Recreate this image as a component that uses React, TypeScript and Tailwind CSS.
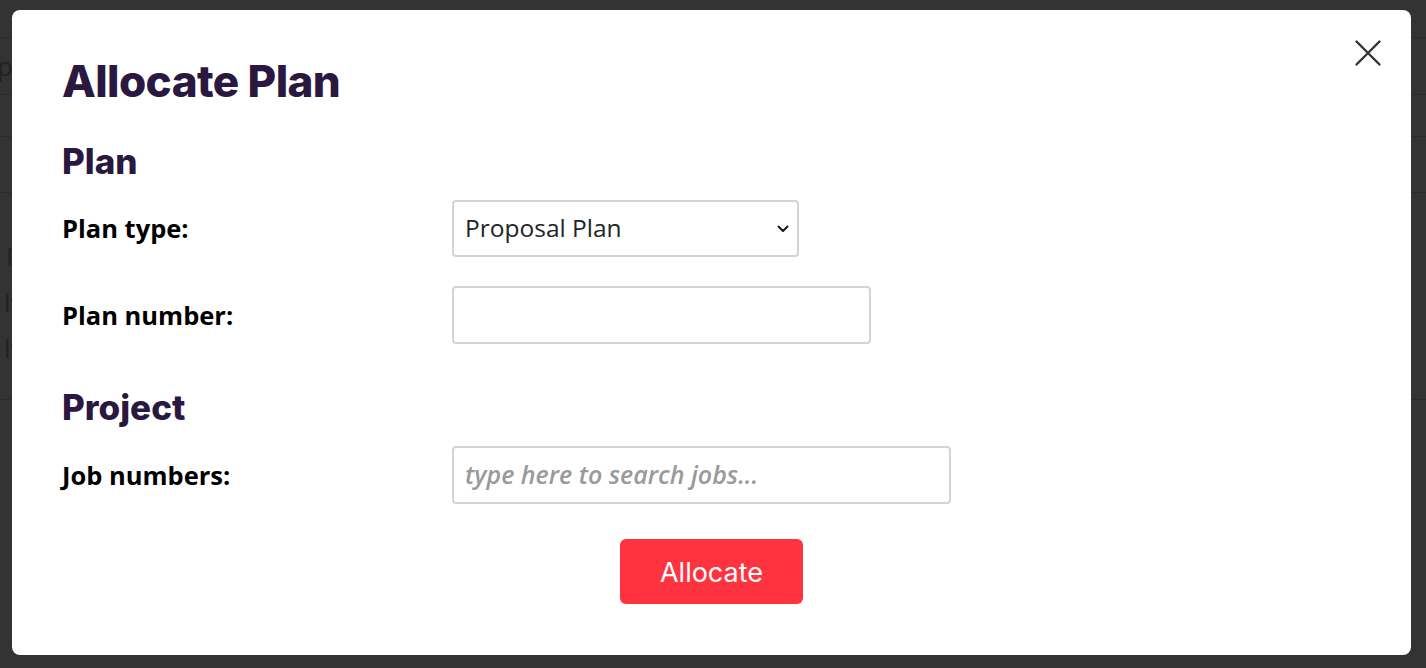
const heading = "font-['Inter',sans-serif] font-extrabold text-[#2a1840]"
const label = "font-['Open_Sans',sans-serif] font-bold text-[25.5px] text-black"

function Backdrop() {
  return (
    <div className="flex h-full flex-col font-['Open_Sans',sans-serif] text-[26px] text-[#222]">
      <div className="h-[38px] border-b border-[#2b2b2b]" />
      <div className="flex h-[57px] items-center border-b border-[#2b2b2b]">
        <span className="-ml-[3px]">pa</span>
      </div>
      <div className="h-[42px] border-b border-[#2b2b2b]" />
      <div className="h-[56px] border-b border-[#2b2b2b]" />
      <div className="flex h-[207px] flex-col gap-[16px] border-b border-[#2b2b2b] pt-[48px] leading-[30px]">
        <span className="ml-[6px]">P</span>
        <span className="ml-[4px]">lv</span>
        <span className="ml-[4px]">lv</span>
      </div>
    </div>
  )
}

function Chevron() {
  return (
    <svg width="12" height="8" viewBox="0 0 12 8" fill="none" className="shrink-0">
      <path d="M1.5 1.5 6 6l4.5-4.5" stroke="#1a1a1a" strokeWidth="2" strokeLinecap="round" strokeLinejoin="round" />
    </svg>
  )
}

function CloseIcon() {
  return (
    <svg width="28" height="28" viewBox="0 0 28 28" fill="none">
      <path d="M2.5 2.5l23 23M25.5 2.5l-23 23" stroke="#333" strokeWidth="2.4" strokeLinecap="round" />
    </svg>
  )
}

function Row({ title, children }: { title: string; children: React.ReactNode }) {
  return (
    <div className="flex items-center">
      <span className={`${label} w-[390px] shrink-0`}>{title}</span>
      {children}
    </div>
  )
}

export default function App() {
  return (
    <div className="relative h-[668px] w-full overflow-hidden bg-[#333333]">
      <Backdrop />

      <div className="absolute left-[12px] top-[10px] flex h-[645px] w-[1399px] flex-col rounded-[8px] bg-white pl-[50px] pt-[49px]">
        <button type="button" aria-label="Close" className="absolute right-[29px] top-[29px]">
          <CloseIcon />
        </button>

        <h1 className={`${heading} text-[44px] leading-[44px] tracking-[-0.6px]`}>Allocate Plan</h1>

        <h2 className={`${heading} mt-[41px] text-[35px] leading-[34px]`}>Plan</h2>

        <div className="mt-[22px]">
          <Row title="Plan type:">
            <div className="flex h-[57px] w-[347px] items-center justify-between rounded-[4px] border-2 border-[#d4d4d4] pl-[11px] pr-[8px] font-['Open_Sans',sans-serif] text-[24.5px] text-[#212529]">
              <span>Proposal Plan</span>
              <Chevron />
            </div>
          </Row>
        </div>

        <div className="mt-[29px]">
          <Row title="Plan number:">
            <div className="h-[58px] w-[419px] rounded-[4px] border-2 border-[#d4d4d4]" />
          </Row>
        </div>

        <h2 className={`${heading} mt-[46px] text-[35px] leading-[34px]`}>Project</h2>

        <div className="mt-[22px]">
          <Row title="Job numbers:">
            <div className="flex h-[58px] w-[499px] items-center rounded-[4px] border-2 border-[#d4d4d4] pl-[11px] font-['Open_Sans',sans-serif] text-[25px] font-semibold italic text-[#9a9a9a]">
              type here to search jobs...
            </div>
          </Row>
        </div>

        <div className="mt-[35px] flex justify-center pr-[50px]">
          <button
            type="button"
            className="h-[65px] w-[183px] rounded-[6px] bg-[#ff333f] pt-[4px] font-['Inter',sans-serif] text-[27px] text-white"
          >
            Allocate
          </button>
        </div>
      </div>
    </div>
  )
}
